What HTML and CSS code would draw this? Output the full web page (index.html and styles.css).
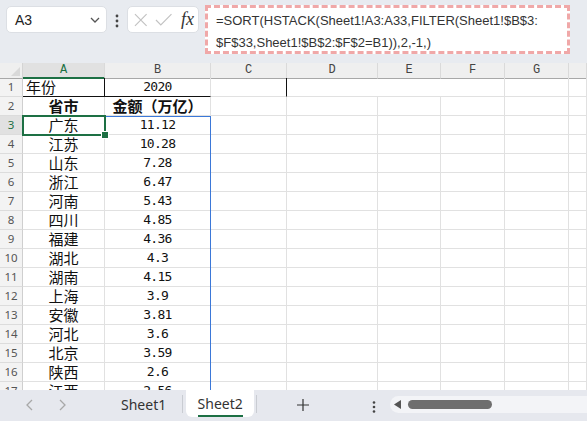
FILE: index.html
```html
<!DOCTYPE html>
<html lang="zh-CN">
<head>
<meta charset="utf-8">
<title>Sheet</title>
<link rel="stylesheet" href="styles.css">
</head>
<body>
<div class="app">
  <div class="toolbar">
    <div class="namebox">
      <span class="ref">A3</span>
      <svg class="chev" width="10" height="6" viewBox="0 0 10 6"><path d="M1 1 L5 5 L9 1" fill="none" stroke="#555" stroke-width="1.3"/></svg>
    </div>
    <svg class="vdots" width="4" height="14" viewBox="0 0 4 14"><circle cx="2" cy="2" r="1.4" fill="#444"/><circle cx="2" cy="7" r="1.4" fill="#444"/><circle cx="2" cy="12" r="1.4" fill="#444"/></svg>
    <div class="fxbox">
      <svg class="ic" width="14" height="14" viewBox="0 0 14 14"><path d="M1 1 L13 13 M13 1 L1 13" stroke="#c2c2c2" stroke-width="1.2"/></svg>
      <svg class="ic" width="18" height="14" viewBox="0 0 18 14"><path d="M1 7 L6 12 L17 1" fill="none" stroke="#c2c2c2" stroke-width="1.2"/></svg>
      <span class="fx">fx</span>
    </div>
    <div class="formula">=SORT(HSTACK(Sheet1!A3:A33,FILTER(Sheet1!$B$3:<br>$F$33,Sheet1!$B$2:$F$2=B1)),2,-1,)</div>
  </div>

  <div class="sheet">
    <div class="row hdr">
      <div class="corner"><span class="tri"></span></div>
      <div class="ch sel">A</div><div class="ch">B</div><div class="ch">C</div><div class="ch">D</div><div class="ch">E</div><div class="ch">F</div><div class="ch">G</div><div class="ch"></div>
    </div>
    <div class="row">
      <div class="rh">1</div>
      <div class="c left bb br">年份</div><div class="c num bb">2020</div><div class="c brk"></div><div class="c span3"></div><div class="c"></div><div class="c"></div>
    </div>
    <div class="row">
      <div class="rh">2</div>
      <div class="c bold">省市</div><div class="c bold">金额（万亿）</div><div class="c"></div><div class="c"></div><div class="c"></div><div class="c"></div><div class="c"></div><div class="c"></div>
    </div>
    <div class="row">
      <div class="rh selr">3</div>
      <div class="c">广东</div><div class="c num">11.12</div><div class="c"></div><div class="c"></div><div class="c"></div><div class="c"></div><div class="c"></div><div class="c"></div>
    </div>
    <div class="row"><div class="rh">4</div><div class="c">江苏</div><div class="c num">10.28</div><div class="c"></div><div class="c"></div><div class="c"></div><div class="c"></div><div class="c"></div><div class="c"></div></div>
    <div class="row"><div class="rh">5</div><div class="c">山东</div><div class="c num">7.28</div><div class="c"></div><div class="c"></div><div class="c"></div><div class="c"></div><div class="c"></div><div class="c"></div></div>
    <div class="row"><div class="rh">6</div><div class="c">浙江</div><div class="c num">6.47</div><div class="c"></div><div class="c"></div><div class="c"></div><div class="c"></div><div class="c"></div><div class="c"></div></div>
    <div class="row"><div class="rh">7</div><div class="c">河南</div><div class="c num">5.43</div><div class="c"></div><div class="c"></div><div class="c"></div><div class="c"></div><div class="c"></div><div class="c"></div></div>
    <div class="row"><div class="rh">8</div><div class="c">四川</div><div class="c num">4.85</div><div class="c"></div><div class="c"></div><div class="c"></div><div class="c"></div><div class="c"></div><div class="c"></div></div>
    <div class="row"><div class="rh">9</div><div class="c">福建</div><div class="c num">4.36</div><div class="c"></div><div class="c"></div><div class="c"></div><div class="c"></div><div class="c"></div><div class="c"></div></div>
    <div class="row"><div class="rh">10</div><div class="c">湖北</div><div class="c num">4.3</div><div class="c"></div><div class="c"></div><div class="c"></div><div class="c"></div><div class="c"></div><div class="c"></div></div>
    <div class="row"><div class="rh">11</div><div class="c">湖南</div><div class="c num">4.15</div><div class="c"></div><div class="c"></div><div class="c"></div><div class="c"></div><div class="c"></div><div class="c"></div></div>
    <div class="row"><div class="rh">12</div><div class="c">上海</div><div class="c num">3.9</div><div class="c"></div><div class="c"></div><div class="c"></div><div class="c"></div><div class="c"></div><div class="c"></div></div>
    <div class="row"><div class="rh">13</div><div class="c">安徽</div><div class="c num">3.81</div><div class="c"></div><div class="c"></div><div class="c"></div><div class="c"></div><div class="c"></div><div class="c"></div></div>
    <div class="row"><div class="rh">14</div><div class="c">河北</div><div class="c num">3.6</div><div class="c"></div><div class="c"></div><div class="c"></div><div class="c"></div><div class="c"></div><div class="c"></div></div>
    <div class="row"><div class="rh">15</div><div class="c">北京</div><div class="c num">3.59</div><div class="c"></div><div class="c"></div><div class="c"></div><div class="c"></div><div class="c"></div><div class="c"></div></div>
    <div class="row"><div class="rh">16</div><div class="c">陕西</div><div class="c num">2.6</div><div class="c"></div><div class="c"></div><div class="c"></div><div class="c"></div><div class="c"></div><div class="c"></div></div>
    <div class="row"><div class="rh">17</div><div class="c">江西</div><div class="c num">2.56</div><div class="c"></div><div class="c"></div><div class="c"></div><div class="c"></div><div class="c"></div><div class="c"></div></div>

    <div class="range"></div>
    <div class="active"><span class="handle"></span></div>
  </div>

  <div class="tabbar">
    <svg class="nav" width="8" height="12" viewBox="0 0 8 12"><path d="M6 1 L1 6 L6 11" fill="none" stroke="#a8a8a8" stroke-width="1.3"/></svg>
    <svg class="nav n2" width="8" height="12" viewBox="0 0 8 12"><path d="M2 1 L7 6 L2 11" fill="none" stroke="#a8a8a8" stroke-width="1.3"/></svg>
    <div class="tab t1">Sheet1</div>
    <span class="sep"></span>
    <div class="tab t2"><span class="tlabel">Sheet2</span></div>
    <span class="sep"></span>
    <svg class="plus" width="12" height="12" viewBox="0 0 12 12"><path d="M6 0 V12 M0 6 H12" stroke="#333" stroke-width="1.2"/></svg>
    <svg class="tdots" width="4" height="12" viewBox="0 0 4 12"><circle cx="2" cy="1.5" r="1.3" fill="#444"/><circle cx="2" cy="6" r="1.3" fill="#444"/><circle cx="2" cy="10.5" r="1.3" fill="#444"/></svg>
    <div class="scroll">
      <svg class="larr" width="7" height="9" viewBox="0 0 7 9"><path d="M7 0 V9 L0 4.5 Z" fill="#555"/></svg>
      <span class="thumb"></span>
    </div>
  </div>
</div>
</body>
</html>
```

FILE: styles.css
```css
* { box-sizing: border-box; }
html, body { margin: 0; padding: 0; }
body { width: 587px; height: 421px; overflow: hidden; background: #e8ebf0; font-family: "Liberation Sans", Arial, sans-serif; }
.app { width: 587px; height: 421px; display: flex; flex-direction: column; }

.toolbar { height: 63px; display: flex; align-items: flex-start; padding: 5px 0 0 6px; flex: none; }
.namebox { margin-top: 1px; width: 101px; height: 27px; background: #fff; border: 1px solid #dcdfe4; border-radius: 5px; display: flex; align-items: center; justify-content: space-between; padding: 0 6px 0 8px; }
.ref { font-size: 14px; color: #222; }
.chev { margin-top: 1px; }
.vdots { margin: 9px 0 0 8px; }
.fxbox { margin: 1px 0 0 8px; width: 72px; height: 27px; background: #fff; border: 1px solid #dcdfe4; border-radius: 5px; display: flex; align-items: center; padding: 0 4px 0 6px; gap: 7px; }
.fx { font-family: "Liberation Serif", serif; font-style: italic; font-size: 18px; color: #333; margin-left: 2px; }
.formula { margin-left: 6px; width: 365px; height: 49px; background: #fff; border: 3px dashed #f0a8a8; padding: 2px 0 0 8px; font-size: 13px; line-height: 22px; color: #333; white-space: nowrap; overflow: hidden; }

.sheet { position: relative; height: 327px; overflow: hidden; background: #fff; flex: none; }
.row { display: grid; grid-template-columns: 23px 82px 106px 76px 91px 63px 64px 64px 18px; height: 19px; }
.row.hdr { height: 15px; }
.corner { background: #efefef; border-right: 1px solid #d4d4d4; border-bottom: 1px solid #a8a8a8; position: relative; }
.tri { position: absolute; right: 2px; bottom: 2px; width: 0; height: 0; border-left: 9px solid transparent; border-bottom: 9px solid #d9d9d9; }
.ch { background: #efefef; border-right: 1px solid #dadada; border-bottom: 1px solid #a8a8a8; font-family: "Liberation Mono", monospace; font-size: 12px; line-height: 14px; text-align: center; color: #444; }
.ch.sel { background: #e1e1e1; color: #1d7044; border-bottom: 2px solid #1d7044; }
.rh { background: #f3f3f3; border-right: 1px solid #cfcfcf; border-bottom: 1px solid #dcdcdc; font-family: "Noto Sans", sans-serif; font-size: 11.5px; line-height: 18px; text-align: center; color: #555; }
.rh.selr { background: #e1e1e1; color: #1d7044; }
.c { border-right: 1px solid #e1e1e1; border-bottom: 1px solid #e1e1e1; font-family: "Noto Sans CJK SC", sans-serif; font-size: 15px; line-height: 18px; text-align: center; color: #111; white-space: nowrap; overflow: visible; }
.c.left { text-align: left; padding-left: 3px; }
.c.num { font-family: "DejaVu Sans Mono", monospace; font-size: 13px; letter-spacing: -0.7px; }
.c.bold { font-weight: 700; }
.c.bb { border-bottom-color: #111; }
.c.br { border-right-color: #111; }
.c.brk { border-right-color: #111; }
.c.span3 { grid-column: span 3; }

.active { position: absolute; left: 22px; top: 52px; width: 84px; height: 21px; border: 2px solid #1d7044; }
.handle { position: absolute; right: -5px; bottom: -5px; width: 6px; height: 6px; background: #1d7044; border: 1px solid #fff; box-sizing: content-box; }
.range { position: absolute; left: 105px; top: 53px; width: 106px; height: 300px; border-top: 1px solid #3b78d8; border-right: 1px solid #3b78d8; }

.tabbar { height: 31px; display: flex; align-items: flex-start; background: #e6e8ee; flex: none; position: relative; }
.nav { margin: 9px 0 0 26px; }
.nav.n2 { margin-left: 24px; }
.tab { height: 27px; font-family: "Noto Sans", sans-serif; font-size: 14px; color: #333; line-height: 30px; }
.t1 { margin-left: 55px; }
.sep { width: 1px; height: 18px; background: #c9ccd2; margin: 5px 0 0 0; }
.t1 + .sep { margin-left: 16px; }
.t2 { margin-left: 3px; width: 68px; background: #fff; border-radius: 0 0 6px 6px; text-align: center; position: relative; line-height: 27px; }
.tlabel { display: inline-block; line-height: 22px; border-bottom: 2px solid #1d7044; padding: 0 0 0 0; }
.t2 + .sep { margin-left: 2px; }
.plus { margin: 9px 0 0 40px; }
.tdots { margin: 11px 0 0 63px; }
.scroll { margin: 6px 0 0 14px; flex: 1; height: 17px; background: #f3f4f7; border-radius: 9px 0 0 9px; display: flex; align-items: center; padding-left: 4px; }
.larr { margin-left: 0; }
.thumb { margin-left: 7px; width: 84px; height: 9px; border-radius: 5px; background: #6e6e6e; }
```
